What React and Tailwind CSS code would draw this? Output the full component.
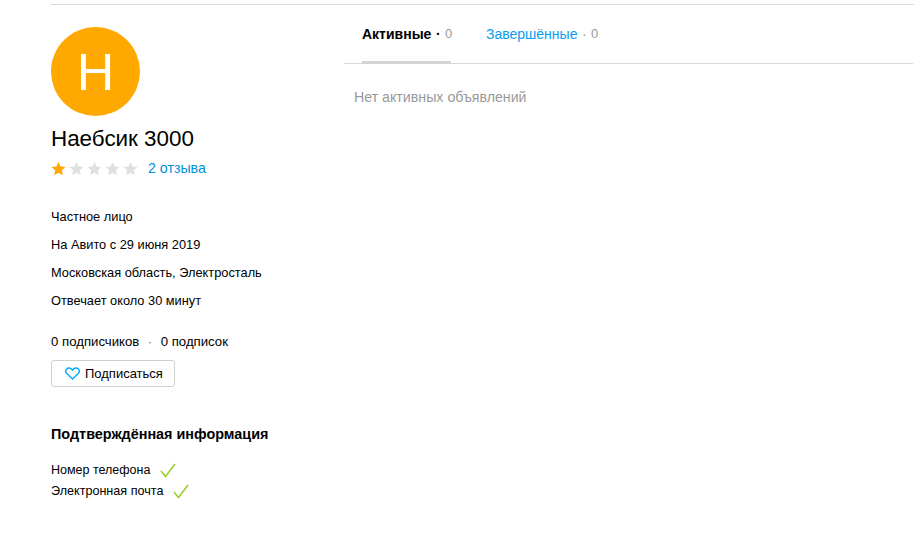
import React from "react";

function Star({ filled }) {
  return (
    <svg width="15" height="15" viewBox="0 0 17 16" className="mb-[2px] mr-[3px] shrink-0">
      <path
        d="M8.5 0.5l2.3 5.3 5.7.5-4.3 3.8 1.3 5.6-5-3-5 3 1.3-5.6L.5 6.3l5.7-.5z"
        fill={filled ? "#ffa800" : "#e0e0e0"}
      />
    </svg>
  );
}

function Check() {
  return (
    <svg width="16" height="15" viewBox="0 0 16 15" fill="none" className="ml-[10px] shrink-0">
      <path d="M1 8l4.5 5.5L15 1" stroke="#97cf26" strokeWidth="1.5" />
    </svg>
  );
}

export default function App() {
  return (
    <div className="h-[560px] w-[922px] overflow-hidden bg-white pl-[51px] pr-2 pt-1 font-['Liberation_Sans',Arial,sans-serif] text-black">
      <div className="border-t border-[#d9d9d9]" />
      <div className="flex">
        {/* Left column with the profile */}
        <div className="w-[293px] shrink-0 pt-[22px]">
          <div className="flex h-[89px] w-[89px] items-center justify-center rounded-full bg-[#ffa800] text-[52px] leading-none text-white">
            H
          </div>
          <h1 className="mt-[9px] text-[22.4px] leading-[28px]">Наебсик 3000</h1>
          <div className="mt-[6px] flex h-5 items-center">
            <Star filled />
            <Star />
            <Star />
            <Star />
            <Star />
            <a className="ml-[7px] text-[14.2px] text-[#0091d9]">2 отзыва</a>
          </div>

          <ul className="mt-[23.5px] text-[12.8px] leading-[28.33px]">
            <li>Частное лицо</li>
            <li>На Авито с 29 июня 2019</li>
            <li>Московская область, Электросталь</li>
            <li>Отвечает около 30 минут</li>
          </ul>

          <div className="mt-[12.2px] flex text-[13.2px] leading-[28px]">
            <span>0 подписчиков</span>
            <span className="mx-[8.5px] text-[#777]">·</span>
            <span>0 подписок</span>
          </div>

          <button className="mt-[4px] flex h-[27px] w-[124px] items-center rounded-[3px] border border-[#d0d0d0] pl-[13px] text-[13px]">
            <svg width="15" height="13" viewBox="0 0 15 13" fill="none" className="mr-[5px]">
              <path
                d="M7.5 12L1.8 6.6C.2 5 .4 3 1.6 1.9 3 .6 5.6.6 7.5 3 9.4.6 12 .6 13.4 1.9c1.2 1.1 1.4 3.1-.2 4.7z"
                stroke="#00aaff"
                strokeWidth="1.4"
              />
            </svg>
            Подписаться
          </button>

          <h2 className="mt-[37px] text-[14.4px] font-bold leading-5">Подтверждённая информация</h2>
          <div className="mt-[16px] flex h-[21px] items-center text-[12.5px]">
            Номер телефона
            <Check />
          </div>
          <div className="flex h-[21px] items-center text-[12.6px]">
            Электронная почта
            <Check />
          </div>
        </div>

        {/* Right column with the tabs */}
        <div className="mr-px flex-1">
          <div className="flex h-[59px] border-b border-[#d9d9d9] pl-[18px] text-sm">
            <div className="-mb-px flex h-[59px] w-[89px] items-start border-b-[3px] border-[#d4d4d4] pt-[20px] leading-[18px]">
              <span className="font-bold">Активные</span>
              <span className="mx-[4.5px] font-bold">·</span>
              <span className="text-[13px] leading-[18px] text-[#999]">0</span>
            </div>
            <div className="ml-[35px] flex items-start pt-[20px] leading-[18px]">
              <span className="text-[#0a9cf0]">Завершённые</span>
              <span className="mx-[4.5px] text-[#999]">·</span>
              <span className="text-[13px] leading-[18px] text-[#999]">0</span>
            </div>
          </div>
          <p className="mt-[23px] pl-[10px] text-[14.2px] leading-5 text-[#999]">Нет активных объявлений</p>
        </div>
      </div>
    </div>
  );
}
